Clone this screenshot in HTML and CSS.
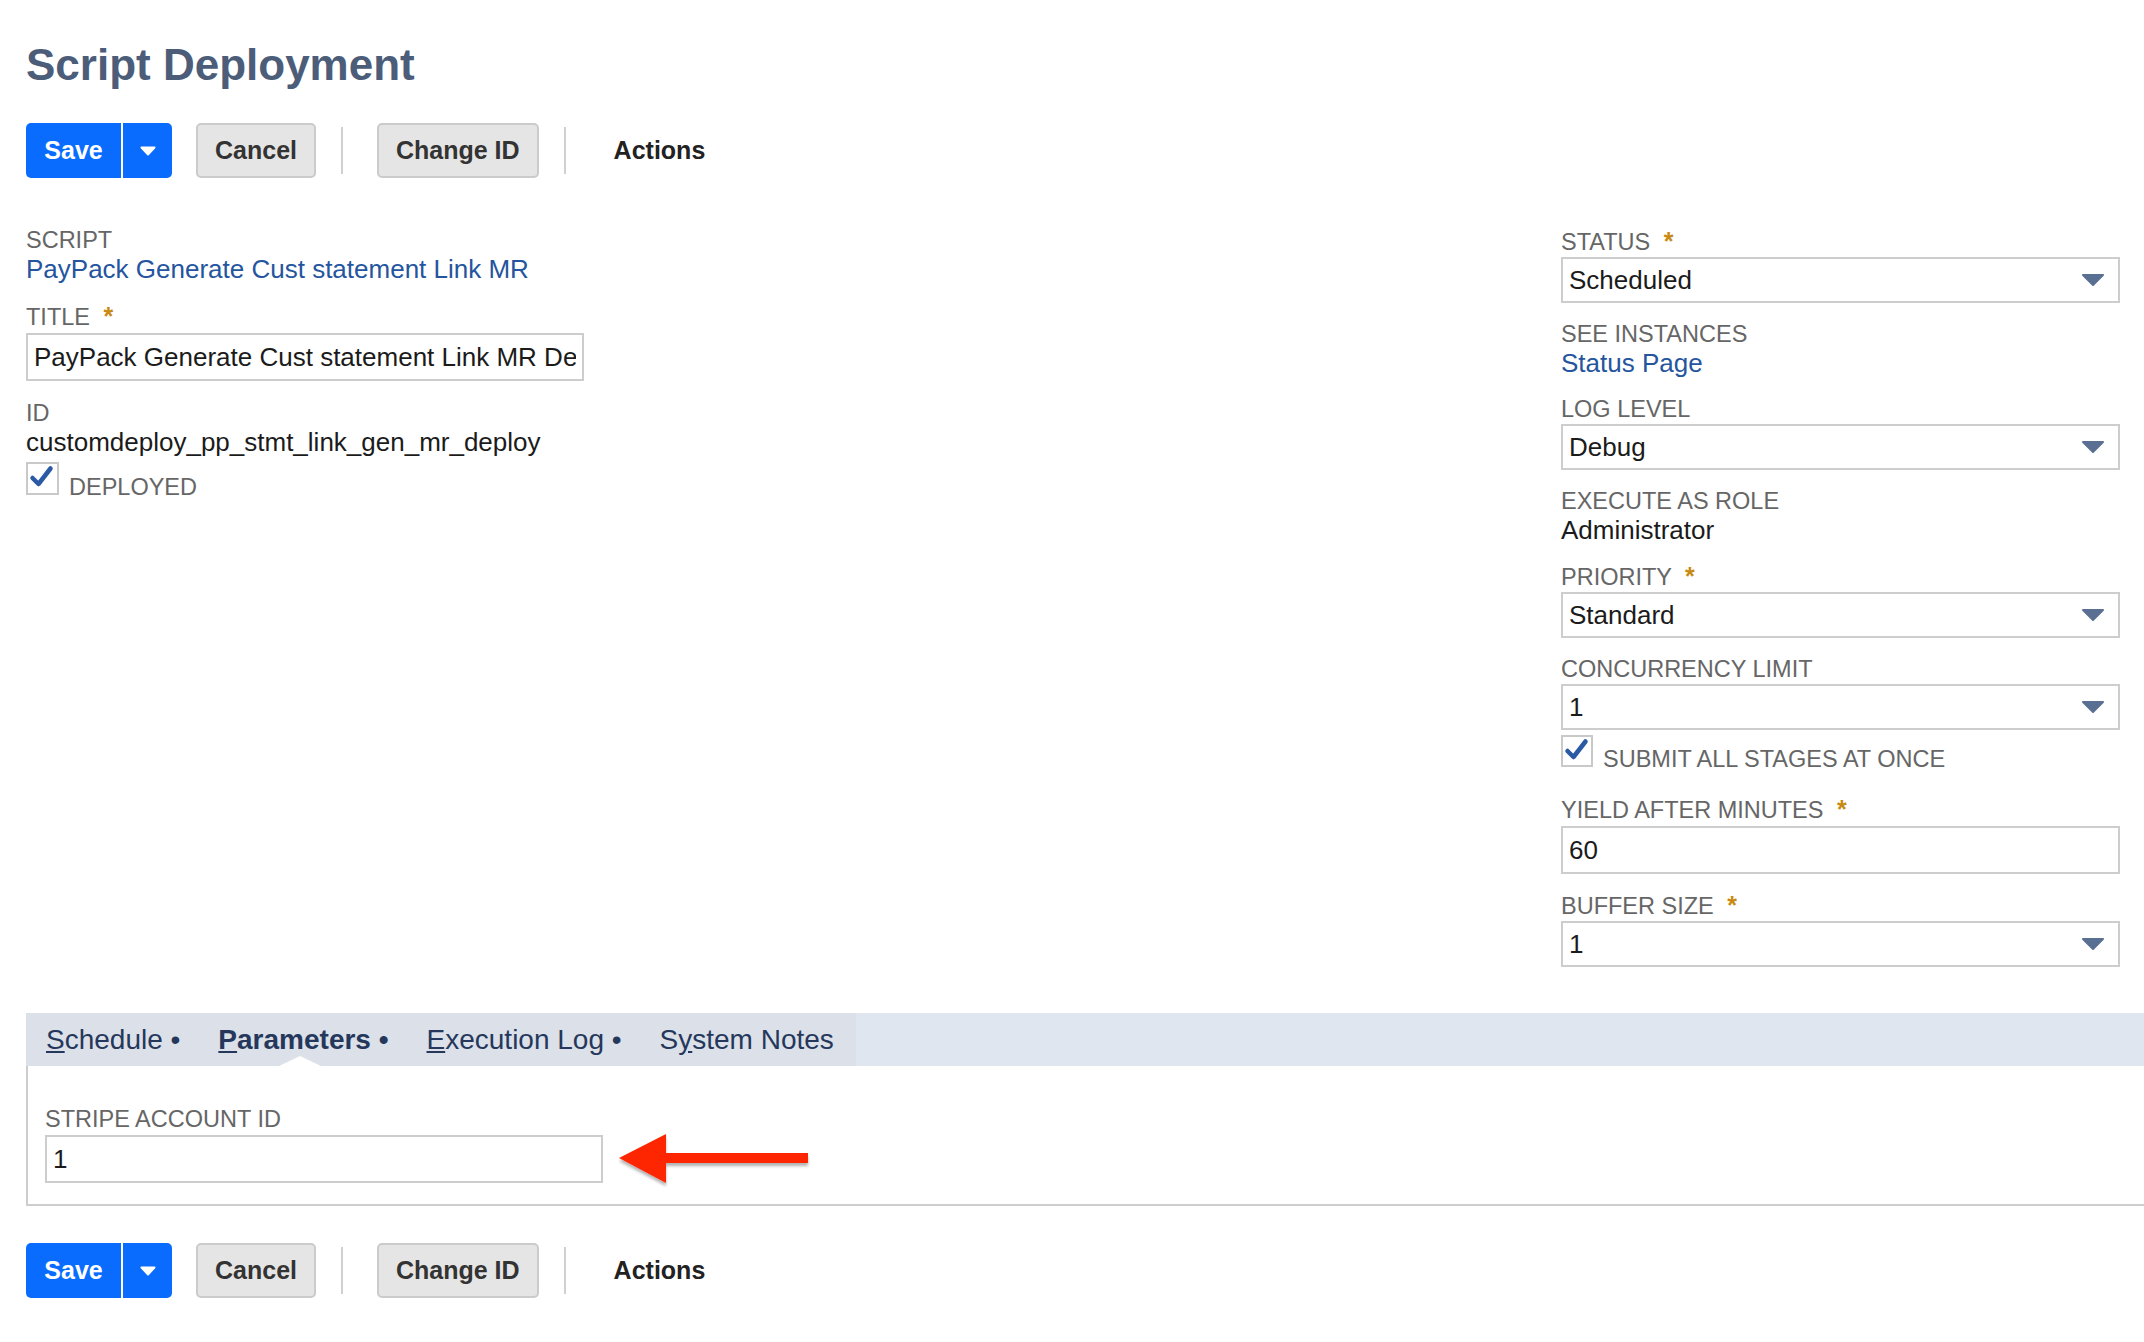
FILE: index.html
```html
<!DOCTYPE html>
<html lang="en">
<head>
  <meta charset="UTF-8">
  <meta name="viewport" content="width=device-width, initial-scale=1.0">
  <title>Script Deployment</title>
  <link rel="stylesheet" href="styles.css">
</head>
<body>
<div class="page">

  <h1 class="page-title">Script Deployment</h1>

  <div class="toolbar">
    <div class="btn-split">
      <button class="btn btn-primary">Save</button>
      <button class="btn btn-primary btn-menu"><svg width="16" height="10" viewBox="0 0 16 10"><path d="M1.5 1.5 H14.5 L8 8.5 Z" fill="#fff" stroke="#fff" stroke-width="2" stroke-linejoin="round"/></svg></button>
    </div>
    <button class="btn btn-secondary">Cancel</button>
    <span class="toolbar-sep"></span>
    <button class="btn btn-secondary">Change ID</button>
    <span class="toolbar-sep"></span>
    <span class="toolbar-action">Actions</span>
  </div>

  <div class="form">
    <div class="col">
      <div class="field">
        <div class="label">SCRIPT</div>
        <div class="value"><a href="#">PayPack Generate Cust statement Link MR</a></div>
      </div>
      <div class="field">
        <div class="label">TITLE <span class="req">*</span></div>
        <input class="text-input" type="text" value="PayPack Generate Cust statement Link MR Deployment">
      </div>
      <div class="field">
        <div class="label">ID</div>
        <div class="value">customdeploy_pp_stmt_link_gen_mr_deploy</div>
        <div class="check-row">
          <span class="checkbox"><svg width="25" height="24" viewBox="0 0 25 24"><path d="M3.5 13 L9.5 19 L21.5 3.5" fill="none" stroke="#2b5aa5" stroke-width="4.5" stroke-linecap="round" stroke-linejoin="round"/></svg></span>
          <span class="label">DEPLOYED</span>
        </div>
      </div>
    </div>

    <div class="col col-right">
      <div class="field">
        <div class="label">STATUS <span class="req">*</span></div>
        <div class="select">Scheduled<svg class="caret" width="24" height="14" viewBox="0 0 24 14"><path d="M2 2 H22 L12 12 Z" fill="#5a7093" stroke="#5a7093" stroke-width="2" stroke-linejoin="round"/></svg></div>
      </div>
      <div class="field">
        <div class="label">SEE INSTANCES</div>
        <div class="value"><a href="#">Status Page</a></div>
      </div>
      <div class="field">
        <div class="label">LOG LEVEL</div>
        <div class="select">Debug<svg class="caret" width="24" height="14" viewBox="0 0 24 14"><path d="M2 2 H22 L12 12 Z" fill="#5a7093" stroke="#5a7093" stroke-width="2" stroke-linejoin="round"/></svg></div>
      </div>
      <div class="field">
        <div class="label">EXECUTE AS ROLE</div>
        <div class="value">Administrator</div>
      </div>
      <div class="field">
        <div class="label">PRIORITY <span class="req">*</span></div>
        <div class="select">Standard<svg class="caret" width="24" height="14" viewBox="0 0 24 14"><path d="M2 2 H22 L12 12 Z" fill="#5a7093" stroke="#5a7093" stroke-width="2" stroke-linejoin="round"/></svg></div>
      </div>
      <div class="field field-check">
        <div class="label">CONCURRENCY LIMIT</div>
        <div class="select">1<svg class="caret" width="24" height="14" viewBox="0 0 24 14"><path d="M2 2 H22 L12 12 Z" fill="#5a7093" stroke="#5a7093" stroke-width="2" stroke-linejoin="round"/></svg></div>
        <div class="check-row">
          <span class="checkbox small"><svg width="25" height="24" viewBox="0 0 25 24"><path d="M3.5 13 L9.5 19 L21.5 3.5" fill="none" stroke="#2b5aa5" stroke-width="4.5" stroke-linecap="round" stroke-linejoin="round"/></svg></span>
          <span class="label">SUBMIT ALL STAGES AT ONCE</span>
        </div>
      </div>
      <div class="field">
        <div class="label">YIELD AFTER MINUTES <span class="req">*</span></div>
        <input class="text-input" type="text" value="60">
      </div>
      <div class="field">
        <div class="label">BUFFER SIZE <span class="req">*</span></div>
        <div class="select">1<svg class="caret" width="24" height="14" viewBox="0 0 24 14"><path d="M2 2 H22 L12 12 Z" fill="#5a7093" stroke="#5a7093" stroke-width="2" stroke-linejoin="round"/></svg></div>
      </div>
    </div>
  </div>

  <div class="subtabs">
    <div class="subtab-list">
      <span class="subtab"><u>S</u>chedule •</span>
      <span class="subtab active"><u>P</u>arameters •</span>
      <span class="subtab"><u>E</u>xecution Log •</span>
      <span class="subtab">S<u>y</u>stem Notes</span>
    </div>
  </div>
  <div class="subtab-panel">
    <div class="label">STRIPE ACCOUNT ID</div>
    <div class="panel-row">
      <input class="text-input" type="text" value="1">
      <svg class="arrow" width="194" height="56" viewBox="0 0 194 56">
        <defs>
          <filter id="shadow" x="-10%" y="-20%" width="120%" height="160%">
            <feDropShadow dx="0" dy="3" stdDeviation="1.6" flood-color="#000" flood-opacity="0.3"/>
          </filter>
        </defs>
        <path d="M1 25 L48 1 L48 20 L190 20 L190 30 L48 30 L48 50 Z" fill="#fe2600" filter="url(#shadow)"/>
      </svg>
    </div>
  </div>

  <div class="toolbar toolbar-bottom">
    <div class="btn-split">
      <button class="btn btn-primary">Save</button>
      <button class="btn btn-primary btn-menu"><svg width="16" height="10" viewBox="0 0 16 10"><path d="M1.5 1.5 H14.5 L8 8.5 Z" fill="#fff" stroke="#fff" stroke-width="2" stroke-linejoin="round"/></svg></button>
    </div>
    <button class="btn btn-secondary">Cancel</button>
    <span class="toolbar-sep"></span>
    <button class="btn btn-secondary">Change ID</button>
    <span class="toolbar-sep"></span>
    <span class="toolbar-action">Actions</span>
  </div>

</div>
</body>
</html>
```

FILE: styles.css
```css
html, body { margin: 0; background: #fff; }
body { font-family: "Liberation Sans", Arial, Helvetica, sans-serif; color: #1b1b1b; }
a { color: #24559e; text-decoration: none; }

.page { padding-left: 26px; }

.page-title {
  margin: 40px 0 0;
  font-size: 44px;
  line-height: 50px;
  font-weight: bold;
  color: #4c5d79;
}

/* button bar */
.toolbar { display: flex; align-items: center; height: 55px; margin-top: 33px; }
.toolbar-bottom { margin-top: 37px; }
.btn {
  font-family: inherit;
  font-size: 25px;
  font-weight: bold;
  height: 55px;
  margin: 0;
  border-radius: 5px;
  cursor: pointer;
}
.btn-split { display: flex; margin-right: 24px; }
.btn-primary {
  background: #0a6cff;
  color: #fff;
  border: none;
  padding: 0 18px;
}
.btn-split .btn-primary:first-child { border-radius: 5px 0 0 5px; width: 95px; }
.btn-menu {
  border-radius: 0 5px 5px 0;
  border-left: 2px solid #fff;
  width: 51px;
  padding: 0;
  display: flex;
  align-items: center;
  justify-content: center;
}
.btn-secondary {
  background: #e5e5e5;
  color: #333;
  border: 2px solid #cbcbcb;
  padding: 0 17px;
}
.toolbar-sep { width: 2px; height: 47px; background: #d0d0d0; margin: 0 34px 0 25px; }
.toolbar-sep + .toolbar-action { margin-left: 14px; }
.toolbar-action { font-size: 25px; font-weight: bold; color: #222; }

/* main form */
.form {
  display: grid;
  grid-template-columns: 1fr 559px;
  padding-right: 24px;
  margin-top: 48px;
  align-items: start;
}
.col { width: 558px; }
.col-right { width: 559px; padding-top: 1px; }
.field { margin-bottom: 18px; }
.col-right .field { margin-bottom: 17px; }
.col-right .field-check { margin-bottom: 22px; }
.field:last-child, .col-right .field:last-child { margin-bottom: 0; }

.label { font-size: 23.5px; line-height: 28px; color: #666; }
.req { color: #c88a12; font-weight: bold; font-size: 25px; margin-left: 7px; }
.value { font-size: 26px; line-height: 30px; color: #1b1b1b; }

.text-input {
  display: block;
  box-sizing: border-box;
  width: 100%;
  height: 48px;
  margin: 2px 0 0;
  padding: 0 6px;
  border: 2px solid #cdcdcd;
  font-family: inherit;
  font-size: 26px;
  color: #1b1b1b;
  background: #fff;
  outline: none;
}
.select {
  display: flex;
  align-items: center;
  box-sizing: border-box;
  height: 46px;
  margin-top: 1px;
  padding: 0 13px 0 6px;
  border: 2px solid #cdcdcd;
  font-size: 26px;
  color: #1b1b1b;
}
.select .caret { margin-left: auto; }

.check-row { display: flex; align-items: baseline; gap: 10px; margin-top: 5px; }
.checkbox {
  position: relative;
  display: block;
  box-sizing: border-box;
  width: 33px;
  height: 33px;
  border: 2px solid #c9c9c9;
  background: #fff;
}
.checkbox.small { width: 32px; height: 32px; }
.checkbox svg { position: absolute; left: 1px; top: 1px; }

/* subtabs */
.subtabs { display: flex; height: 53px; margin-top: 46px; background: #dfe6f0; }
.subtab-list { display: flex; background: #dce0e8; }
.subtab {
  position: relative;
  padding: 0 19px;
  font-size: 28px;
  line-height: 53px;
  color: #25385c;
  white-space: nowrap;
}
.subtab:first-child { padding-left: 20px; }
.subtab:last-child { padding-right: 22px; }
.subtab.active { font-weight: bold; }
.subtab.active::after {
  content: "";
  position: absolute;
  left: 80px;
  bottom: 0;
  border-left: 21px solid transparent;
  border-right: 21px solid transparent;
  border-bottom: 10px solid #fff;
}
.subtab-panel {
  border-left: 2px solid #cdcdcd;
  border-bottom: 2px solid #cdcdcd;
  padding: 39px 17px 21px;
}
.panel-row { display: flex; align-items: center; margin-top: 2px; }
.panel-row .text-input { width: 558px; margin: 0; }
.arrow { margin: -2px 0 -6px 15px; }
```
